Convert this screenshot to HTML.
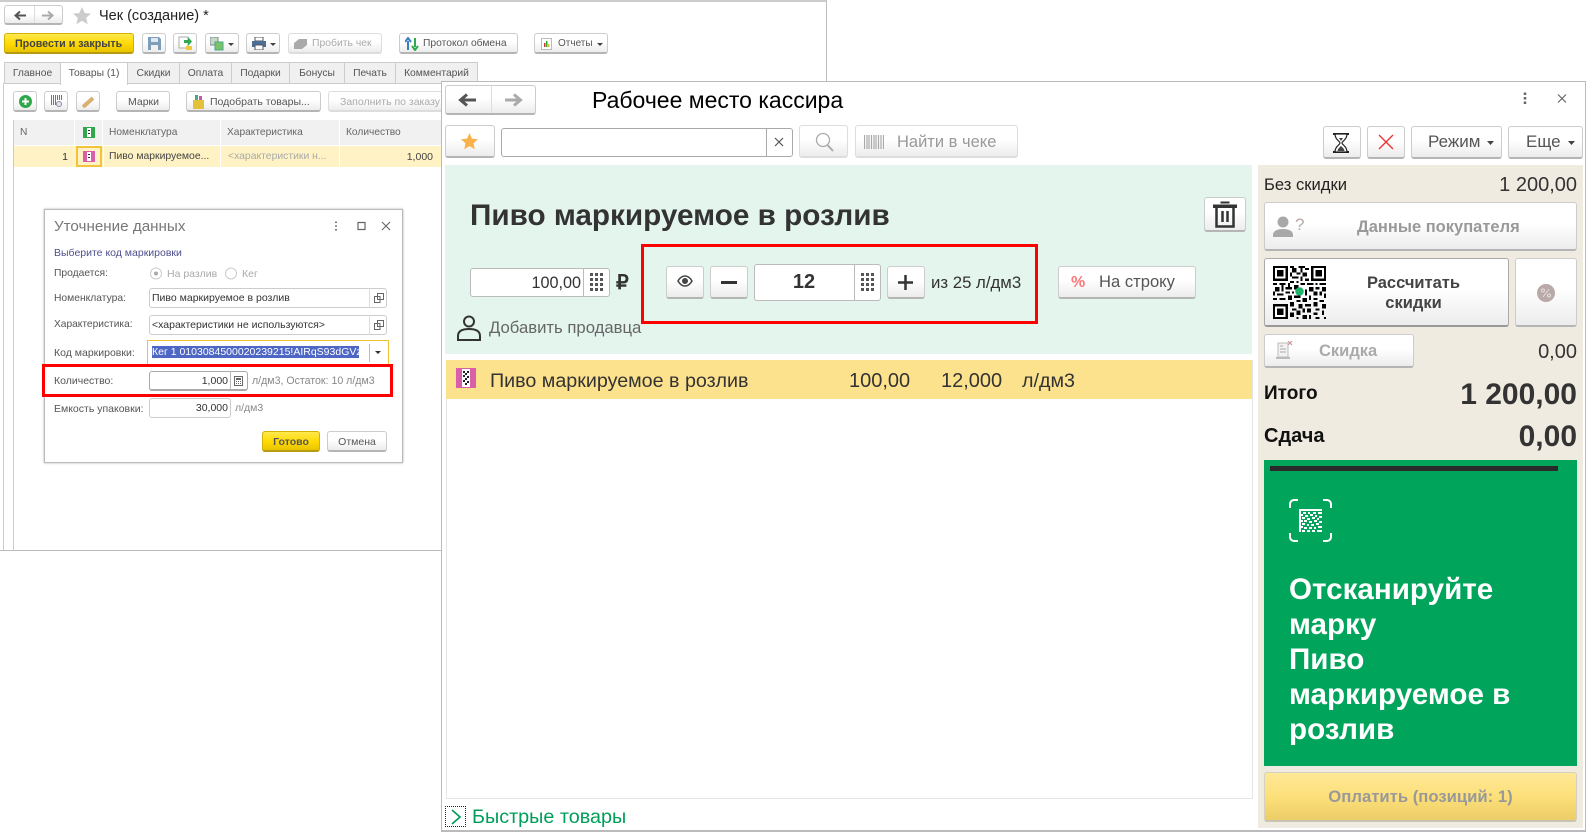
<!DOCTYPE html>
<html lang="ru"><head><meta charset="utf-8"><title>Рабочее место кассира</title>
<style>
html,body{margin:0;padding:0;background:#fff}
body{position:relative;width:1587px;height:834px;overflow:hidden;font-family:"Liberation Sans",sans-serif;color:#444}
div,svg{position:absolute;box-sizing:border-box}
.t{white-space:nowrap;line-height:0;height:0}
.b{background:linear-gradient(#fff 45%,#ececec);border:1px solid #ccc;border-bottom:2px solid #b5b5b5;border-radius:3px}
.i{background:#fff;border:1px solid #ccc;border-radius:3px}
.y{background:linear-gradient(#ffe94d,#ffd900 55%,#e8c400);border:1px solid #d3b100;border-bottom:2px solid #b79a10;border-radius:3px}
.s{font-size:11px;color:#555}
.tab{background:#f0f0f0;border:1px solid #ccc;border-bottom:0;height:21px;top:62px;font-size:10.300px;color:#555;text-align:center;line-height:21px;white-space:nowrap}
.c{background:#f1f1f1;top:120px;height:25px;border-right:1px solid #fff;font-size:10.200px;color:#666;line-height:25px;padding-left:6px;white-space:nowrap}
#back{left:0;top:0;width:1587px;height:834px;filter:blur(.35px)}
</style></head><body>

<div id="back">
<!-- BACK WINDOW -->
<div style="left:0;top:0;width:827px;height:551px;background:#fff;border-right:1px solid #bbb;border-bottom:1px solid #bbb;border-top:2px solid #ccc"></div>
<div style="left:3px;top:83px;width:1px;height:467px;background:#ccc"></div>
<div class="b" style="left:4px;top:5px;width:59px;height:20px"></div>
<div style="left:34px;top:6px;width:1px;height:17px;background:#ddd"></div>
<svg style="left:12px;top:9px" width="46" height="13" viewBox="0 0 46 13"><path d="M14 6.500H4M8 2.500L3.500 6.500 8 10.500" fill="none" stroke="#555" stroke-width="2"/><path d="M30 6.500H40M36 2.500L40.500 6.500 36 10.500" fill="none" stroke="#aaa" stroke-width="2"/></svg>
<svg style="left:72px;top:6px" width="20" height="20" viewBox="0 0 20 20"><path d="M10 1l2.700 6 6.300.6-4.800 4.200 1.500 6.400L10 14.800 4.300 18.200l1.500-6.400L1 7.600 7.300 7z" fill="#ccc"/></svg>
<div class="t" style="left:99px;top:16px;font-size:14.500px;color:#222">Чек (создание) *</div>

<div class="y" style="left:4px;top:33px;width:130px;height:21px"></div>
<div class="t" style="left:15px;top:44px;font-size:10.700px;font-weight:bold;color:#444">Провести и закрыть</div>
<div class="b" style="left:142px;top:33px;width:24px;height:21px"></div>
<svg style="left:148px;top:37px" width="13" height="13" viewBox="0 0 13 13"><path d="M0 0h11l2 2v11H0z" fill="#7d9db9"/><path d="M3 1h7v4H3z" fill="#dce8f2"/><path d="M3 8h7v5H3z" fill="#f0f0f0"/></svg>
<div class="b" style="left:173px;top:33px;width:24px;height:21px"></div>
<svg style="left:178px;top:36px" width="15" height="15" viewBox="0 0 15 15"><path d="M1 1h9v11H1z" fill="#fff" stroke="#aaa"/><path d="M6 4h4V1l4 4.500L10 10V7H6z" fill="#2fa84f"/><path d="M8 10h6v4H8z" fill="#f0c93a"/></svg>
<div class="b" style="left:205px;top:33px;width:34px;height:21px"></div>
<svg style="left:210px;top:37px" width="14" height="14" viewBox="0 0 14 14"><path d="M0 0h8v8H0z" fill="#c9d8c0" stroke="#789"/><path d="M5 5h8v8H5z" fill="#7cc06a" stroke="#4a8"/></svg>
<svg style="left:228px;top:43px" width="6" height="3" viewBox="0 0 6 3"><path d="M0 0h6L3 3z" fill="#444"/></svg>
<div class="b" style="left:246px;top:33px;width:34px;height:21px"></div>
<svg style="left:252px;top:37px" width="14" height="13" viewBox="0 0 14 13"><path d="M3 0h8v4H3z" fill="#fff" stroke="#556"/><path d="M0 4h14v6H0z" fill="#4a6f93"/><path d="M3 8h8v5H3z" fill="#fff" stroke="#556"/></svg>
<svg style="left:270px;top:43px" width="6" height="3" viewBox="0 0 6 3"><path d="M0 0h6L3 3z" fill="#444"/></svg>
<div class="b" style="left:288px;top:33px;width:94px;height:21px;border-color:#ddd"></div>
<svg style="left:294px;top:39px" width="13" height="10" viewBox="0 0 13 10"><path d="M0 4l5-4h8v6l-5 4H0z" fill="#aaa"/></svg>
<div class="t" style="left:312px;top:44px;font-size:10.400px;color:#aaa">Пробить чек</div>
<div class="b" style="left:399px;top:33px;width:119px;height:21px"></div>
<svg style="left:405px;top:37px" width="14" height="14" viewBox="0 0 14 14"><path d="M3 13V4M0 5l3-4 3 4" fill="none" stroke="#3a7fc0" stroke-width="2"/><path d="M10 1v9M7 9l3 4 3-4" fill="none" stroke="#2fa84f" stroke-width="2"/></svg>
<div class="t s" style="left:423px;top:44px;font-size:10.300px">Протокол обмена</div>
<div class="b" style="left:534px;top:33px;width:74px;height:21px"></div>
<svg style="left:541px;top:38px" width="11" height="12" viewBox="0 0 11 12"><path d="M.5.500h10v11H.5z" fill="#fff" stroke="#bbb"/><path d="M3 5h1.500v4H3z" fill="#c33"/><path d="M5 3h1.500v6H5z" fill="#3a3"/><path d="M7 6h1.500v3H7z" fill="#cc3"/></svg>
<div class="t s" style="left:558px;top:44px;font-size:10px">Отчеты</div>
<svg style="left:597px;top:43px" width="6" height="3" viewBox="0 0 6 3"><path d="M0 0h6L3 3z" fill="#444"/></svg>

<div style="left:4px;top:83px;width:822px;height:1px;background:#ccc"></div>
<div class="tab" style="left:4px;width:57px">Главное</div>
<div class="tab" style="left:127px;width:53px">Скидки</div>
<div class="tab" style="left:179px;width:53px">Оплата</div>
<div class="tab" style="left:231px;width:59px">Подарки</div>
<div class="tab" style="left:289px;width:56px">Бонусы</div>
<div class="tab" style="left:344px;width:52px">Печать</div>
<div class="tab" style="left:395px;width:83px">Комментарий</div>
<div class="tab" style="left:60px;width:68px;background:#fff;height:23px">Товары (1)</div>

<div class="b" style="left:13px;top:91px;width:24px;height:21px"></div>
<svg style="left:19px;top:95px" width="13" height="13" viewBox="0 0 13 13"><circle cx="6.500" cy="6.500" r="6.500" fill="#2ea84a"/><path d="M6.500 3v7M3 6.500h7" stroke="#fff" stroke-width="2"/></svg>
<div class="b" style="left:44px;top:91px;width:24px;height:21px"></div>
<svg style="left:50px;top:95px" width="13" height="13" viewBox="0 0 13 13"><path d="M1.500 0v10M3.500 0v10M5.500 0v10M7.500 0v5M9.500 0v5M11.500 0v5" stroke="#666" stroke-width=".9"/><circle cx="9" cy="9" r="2.500" fill="#e4e8f0" stroke="#889"/></svg>
<div class="b" style="left:76px;top:91px;width:24px;height:21px"></div>
<svg style="left:82px;top:95px" width="13" height="13" viewBox="0 0 13 13"><path d="M1 12L11 3" stroke="#d8b070" stroke-width="4"/></svg>
<div class="b" style="left:116px;top:91px;width:54px;height:21px"></div>
<div class="t s" style="left:128px;top:102px;font-size:10.500px">Марки</div>
<div class="b" style="left:186px;top:91px;width:135px;height:21px"></div>
<svg style="left:192px;top:94px" width="13" height="15" viewBox="0 0 13 15"><path d="M1 6h11v9H1z" fill="#e3c23a"/><path d="M3 1h3v5H3z" fill="#4a8"/><path d="M7 2h3v4H7z" fill="#c5a"/></svg>
<div class="t s" style="left:210px;top:102px;font-size:10.500px">Подобрать товары...</div>
<div class="b" style="left:328px;top:91px;width:120px;height:21px;border-color:#ddd"></div>
<div class="t" style="left:340px;top:102px;font-size:10.500px;color:#aaa">Заполнить по заказу</div>

<div style="left:13px;top:120px;width:1px;height:431px;background:#ccc"></div>
<div class="c" style="left:14px;width:61px">N</div>
<div class="c" style="left:75px;width:28px"></div>
<svg style="left:83px;top:127px" width="12" height="11" viewBox="0 0 12 11"><path d="M0 0h12v11H0z" fill="#2ea84a"/><path d="M4 1h4v9H4z" fill="#fff"/><path d="M5 3h2v1H5zM5 6h2v1H5z" fill="#333"/></svg>
<div class="c" style="left:103px;width:118px;padding-left:6px">Номенклатура</div>
<div class="c" style="left:221px;width:119px">Характеристика</div>
<div class="c" style="left:340px;width:102px">Количество</div>
<div style="left:14px;top:146px;width:427px;height:21px;background:#fff2c4"></div>
<div style="left:76px;top:146px;width:26px;height:21px;border:2px solid #f5c33b;background:#fff2c4"></div>
<svg style="left:83px;top:151px" width="12" height="11" viewBox="0 0 12 11"><path d="M0 0h12v11H0z" fill="#d95fa8"/><path d="M4 1h4v9H4z" fill="#fff"/><path d="M5 3h2v1H5zM5 6h2v1H5z" fill="#333"/></svg>
<div style="left:103px;top:146px;width:1px;height:21px;background:#fff"></div>
<div style="left:220px;top:146px;width:1px;height:21px;background:#fff"></div>
<div style="left:339px;top:146px;width:1px;height:21px;background:#fff"></div>
<div class="t s" style="right:1519px;top:157px;font-size:10.500px;color:#333">1</div>
<div class="t s" style="left:109px;top:157px;font-size:10.400px;color:#444">Пиво маркируемое...</div>
<div class="t s" style="left:228px;top:157px;font-size:10.400px;color:#aaa">&lt;характеристики н...</div>
<div class="t s" style="right:1154px;top:157px;font-size:10.500px;color:#444">1,000</div>

<!-- DIALOG -->
<div style="left:44px;top:209px;width:359px;height:254px;background:#fff;border:1px solid #bbb;box-shadow:0 0 2px #aaa"></div>
<div class="t" style="left:54px;top:227px;font-size:15.200px;color:#777">Уточнение данных</div>
<svg style="left:334px;top:220px" width="60" height="12" viewBox="0 0 60 12"><path d="M2 1.500v1.500M2 5.200v1.500M2 9v1.500" stroke="#666" stroke-width="1.800"/><path d="M24 2.500h7v7h-7z" fill="none" stroke="#666" stroke-width="1.200"/><path d="M48 2l8 8M56 2l-8 8" stroke="#666" stroke-width="1.100"/></svg>
<div class="t s" style="left:54px;top:253px;font-size:10.500px;color:#4f4f8f">Выберите код маркировки</div>
<div class="t s" style="left:54px;top:274px;font-size:10.300px">Продается:</div>
<svg style="left:150px;top:267px" width="90" height="13" viewBox="0 0 90 13"><circle cx="6" cy="6.500" r="5.500" fill="#fff" stroke="#ccc"/><circle cx="6" cy="6.500" r="2" fill="#aaa"/><circle cx="81" cy="6.500" r="5.500" fill="#fff" stroke="#ccc"/></svg>
<div class="t" style="left:167px;top:274px;font-size:10.500px;color:#aaa">На разлив</div>
<div class="t" style="left:242px;top:274px;font-size:10.500px;color:#aaa">Кег</div>
<div class="t s" style="left:54px;top:299px;font-size:10.300px">Номенклатура:</div>
<div class="i" style="left:149px;top:288px;width:238px;height:20px"></div>
<div style="left:369px;top:288px;width:1px;height:20px;background:#ddd"></div>
<div class="t s" style="left:152px;top:298px;font-size:10.500px;color:#333">Пиво маркируемое в розлив</div>
<svg style="left:374px;top:293px" width="10" height="10" viewBox="0 0 10 10"><path d="M3.500.5h6v6h-6zM.5 3.500h5.500v6H.5z" fill="#fff" stroke="#666"/></svg>
<div class="t s" style="left:54px;top:325px;font-size:10.200px">Характеристика:</div>
<div class="i" style="left:149px;top:315px;width:238px;height:20px"></div>
<div style="left:369px;top:315px;width:1px;height:20px;background:#ddd"></div>
<div class="t s" style="left:152px;top:325px;font-size:10.500px;color:#333">&lt;характеристики не используются&gt;</div>
<svg style="left:374px;top:320px" width="10" height="10" viewBox="0 0 10 10"><path d="M3.500.5h6v6h-6zM.5 3.500h5.500v6H.5z" fill="#fff" stroke="#666"/></svg>
<div class="t s" style="left:54px;top:353px;font-size:10.500px">Код маркировки:</div>
<div style="left:147px;top:340px;width:242px;height:26px;border:1px solid #f3c233;background:#fff"></div>
<div style="left:152px;top:346px;width:207px;height:12px;background:#4f67c4"></div>
<div class="t" style="left:152px;top:352px;font-size:10.500px;color:#fff">Кег 1 0103084500020239215!AIRqS93dGVz</div>
<div style="left:369px;top:344px;width:1px;height:18px;background:#bbb"></div>
<svg style="left:375px;top:351px" width="6" height="3" viewBox="0 0 6 3"><path d="M0 0h6L3 3z" fill="#333"/></svg>
<div class="t s" style="left:54px;top:381px;font-size:10.500px">Количество:</div>
<div class="i" style="left:149px;top:371px;width:99px;height:20px;border-color:#aaa;border-bottom-width:2px"></div>
<div style="left:230px;top:371px;width:1px;height:19px;background:#bbb"></div>
<div class="t s" style="right:1359px;top:381px;font-size:10.500px;color:#333">1,000</div>
<svg style="left:234px;top:376px" width="9" height="10" viewBox="0 0 9 10"><path d="M.5.500h8v9h-8z" fill="#fff" stroke="#666"/><path d="M2 2h5v2H2zM2 5h1v1H2zM4 5h1v1H4zM6 5h1v1H6zM2 7h1v1H2zM4 7h1v1H4zM6 7h1v1H6z" fill="#666"/></svg>
<div class="t" style="left:252px;top:381px;font-size:10.600px;color:#888">л/дм3, Остаток: 10 л/дм3</div>
<div class="t s" style="left:54px;top:409px;font-size:10.500px">Емкость упаковки:</div>
<div class="i" style="left:149px;top:398px;width:82px;height:20px"></div>
<div class="t s" style="right:1359px;top:408px;font-size:10.500px;color:#333">30,000</div>
<div class="t" style="left:235px;top:408px;font-size:10.500px;color:#888">л/дм3</div>
<div class="y" style="left:262px;top:431px;width:58px;height:21px"></div>
<div class="t" style="left:262px;width:58px;text-align:center;top:442px;font-size:10.500px;font-weight:bold;color:#555">Готово</div>
<div class="b" style="left:327px;top:431px;width:60px;height:21px"></div>
<div class="t s" style="left:327px;width:60px;text-align:center;top:442px;font-size:10.500px">Отмена</div>
<div style="left:42px;top:364px;width:351px;height:33px;border:3px solid #f00"></div>
</div>

<!-- MAIN WINDOW -->
<div style="left:441px;top:81px;width:1145px;height:751px;background:#fff;border:1px solid #bbb;border-bottom-width:2px"></div>
<div class="b" style="left:445px;top:85px;width:91px;height:30px"></div>
<div style="left:491px;top:86px;width:1px;height:27px;background:#ddd"></div>
<svg style="left:458px;top:92px" width="70" height="16" viewBox="0 0 70 16"><path d="M18 8H3M9 2.500L2.500 8 9 13.500" fill="none" stroke="#555" stroke-width="3"/><path d="M47 8h15M56 2.500L62.500 8 56 13.500" fill="none" stroke="#aaa" stroke-width="3"/></svg>
<div class="t" style="left:592px;top:100px;font-size:23px;color:#000">Рабочее место кассира</div>
<svg style="left:1522px;top:92px" width="50" height="13" viewBox="0 0 50 13"><path d="M3 .5v2.500M3 5v2.500M3 9.500V12" stroke="#666" stroke-width="2.500"/><path d="M36 2.500l8 8M44 2.500l-8 8" stroke="#666" stroke-width="1.200"/></svg>

<div class="b" style="left:445px;top:125px;width:50px;height:33px"></div>
<svg style="left:461px;top:133px" width="17" height="17" viewBox="0 0 17 17"><path d="M8.500 0l2.500 5.600 6 .6-4.500 4 1.300 6-5.300-3.100-5.300 3.100 1.300-6L0 6.200l6-.6z" fill="#f9b24a"/></svg>
<div class="i" style="left:501px;top:128px;width:292px;height:29px;border-color:#aaa"></div>
<div style="left:766px;top:128px;width:1px;height:29px;background:#aaa"></div>
<svg style="left:774px;top:137px" width="10" height="10" viewBox="0 0 10 10"><path d="M1 1l8 8M9 1L1 9" stroke="#555" stroke-width="1.200"/></svg>
<div class="b" style="left:799px;top:125px;width:49px;height:33px;border-color:#ddd"></div>
<svg style="left:815px;top:132px" width="20" height="20" viewBox="0 0 20 20"><circle cx="8" cy="8" r="6.500" fill="none" stroke="#aaa" stroke-width="1.300"/><path d="M12.500 13l5.500 6" stroke="#aaa" stroke-width="2"/></svg>
<div class="b" style="left:855px;top:125px;width:163px;height:33px;border-color:#ddd"></div>
<svg style="left:864px;top:135px" width="20" height="14" viewBox="0 0 20 14"><path d="M.5 0v14M3 0v14M5 0v14M7.500 0v14M10 0v14M12 0v14M14.500 0v14M17 0v14M19.500 0v14" stroke="#aaa" stroke-width="1.200"/></svg>
<div class="t" style="left:897px;top:142px;font-size:16.500px;color:#999">Найти в чеке</div>

<!-- green panel -->
<div style="left:445px;top:165px;width:807px;height:189px;background:#e4f5ee"></div>
<div class="t" style="left:470px;top:216px;font-size:29.700px;font-weight:bold;color:#333">Пиво маркируемое в розлив</div>
<div class="b" style="left:1204px;top:197px;width:42px;height:35px"></div>
<svg style="left:1213px;top:201px" width="24" height="27" viewBox="0 0 24 27"><path d="M8 2.500V1h8v1.500M0 4h24v2.500H0z" fill="#333" stroke="#333"/><path d="M3.500 6.500V25.500h17V6.500" fill="none" stroke="#333" stroke-width="2.500"/><path d="M9.500 10v11M14.500 10v11" stroke="#333" stroke-width="2.500"/></svg>

<div class="i" style="left:470px;top:268px;width:140px;height:29px;border-color:#bbb"></div>
<div style="left:583px;top:268px;width:1px;height:29px;background:#bbb"></div>
<div class="t" style="right:1006px;top:283px;font-size:16.200px;color:#333">100,00</div>
<svg style="left:590px;top:273px" width="14" height="19" viewBox="0 0 14 19"><path d="M0 0h3v3H0zM5 0h3v3H5zM10 0h3v3h-3zM0 5h3v3H0zM5 5h3v3H5zM10 5h3v3h-3zM0 10h3v3H0zM5 10h3v3H5zM10 10h3v3h-3zM0 15h3v3H0zM5 15h3v3H5zM10 15h3v3h-3z" fill="#555"/></svg>
<div class="t" style="left:616px;top:283px;font-size:20px;font-weight:bold;color:#333">₽</div>

<div class="b" style="left:666px;top:266px;width:38px;height:33px"></div>
<svg style="left:677px;top:275px" width="16" height="12" viewBox="0 0 16 12"><path d="M1 6c2-3.500 4.500-5 7-5s5 1.500 7 5c-2 3.500-4.500 5-7 5S3 9.500 1 6z" fill="#fff" stroke="#444" stroke-width="1.500"/><circle cx="8" cy="6" r="3" fill="#444"/></svg>
<div class="b" style="left:710px;top:266px;width:38px;height:33px"></div>
<div style="left:721px;top:281px;width:16px;height:3px;background:#333"></div>
<div class="i" style="left:754px;top:264px;width:127px;height:37px;border-color:#bbb"></div>
<div style="left:854px;top:264px;width:1px;height:37px;background:#bbb"></div>
<div class="t" style="left:754px;width:100px;text-align:center;top:282px;font-size:20px;font-weight:bold;color:#333">12</div>
<svg style="left:861px;top:273px" width="14" height="19" viewBox="0 0 14 19"><path d="M0 0h3v3H0zM5 0h3v3H5zM10 0h3v3h-3zM0 5h3v3H0zM5 5h3v3H5zM10 5h3v3h-3zM0 10h3v3H0zM5 10h3v3H5zM10 10h3v3h-3zM0 15h3v3H0zM5 15h3v3H5zM10 15h3v3h-3z" fill="#555"/></svg>
<div class="b" style="left:887px;top:266px;width:38px;height:33px"></div>
<svg style="left:897px;top:274px" width="17" height="17" viewBox="0 0 17 17"><path d="M8.500 1v15M1 8.500h15" stroke="#333" stroke-width="2.500"/></svg>
<div class="t" style="left:931px;top:283px;font-size:16.800px;color:#333">из 25 л/дм3</div>
<div style="left:641px;top:244px;width:397px;height:80px;border:3px solid #f00"></div>

<div class="b" style="left:1058px;top:266px;width:138px;height:33px"></div>
<div class="t" style="left:1071px;top:283px;font-size:16px;font-weight:bold;color:#f77">%</div>
<div class="t" style="left:1099px;top:282px;font-size:16.600px;color:#555">На строку</div>

<svg style="left:456px;top:315px" width="26" height="26" viewBox="0 0 26 26"><circle cx="13" cy="6.500" r="5" fill="none" stroke="#333" stroke-width="2"/><path d="M2 25v-4c0-5 4-7 11-7s11 2 11 7v4z" fill="none" stroke="#333" stroke-width="2"/></svg>
<div class="t" style="left:489px;top:328px;font-size:16.700px;color:#666">Добавить продавца</div>

<!-- list -->
<div style="left:446px;top:360px;width:807px;height:439px;border:1px solid #e5e5e5;border-top:0"></div>
<div style="left:446px;top:360px;width:806px;height:39px;background:#fde28d"></div>
<svg style="left:456px;top:368px" width="20" height="20" viewBox="0 0 20 20"><path d="M0 0h20v20H0z" fill="#d95fa8"/><path d="M6 1h8v18H6z" fill="#fff"/><path d="M7 3h2v2H7zM11 3h2v2h-2zM9 5h2v2H9zM7 7h2v2H7zM11 8h2v2h-2zM9 10h2v2H9zM7 12h2v2H7zM11 13h2v2h-2zM9 15h2v2H9z" fill="#222"/></svg>
<div class="t" style="left:490px;top:381px;font-size:19.700px;color:#333">Пиво маркируемое в розлив</div>
<div class="t" style="left:849px;top:381px;font-size:20px;color:#333">100,00</div>
<div class="t" style="left:941px;top:381px;font-size:20px;color:#333">12,000</div>
<div class="t" style="left:1022px;top:381px;font-size:19.700px;color:#333">л/дм3</div>

<div style="left:445px;top:806px;width:21px;height:21px;border:1px dotted #222"></div>
<svg style="left:451px;top:809px" width="11" height="16" viewBox="0 0 11 16"><path d="M1 1l8 7-8 7" fill="none" stroke="#00a05a" stroke-width="1.700"/></svg>
<div class="t" style="left:472px;top:817px;font-size:19.800px;color:#009e58">Быстрые товары</div>

<!-- top right buttons -->
<div class="b" style="left:1323px;top:126px;width:38px;height:33px"></div>
<svg style="left:1332px;top:133px" width="18" height="20" viewBox="0 0 18 20"><path d="M1 1h16M1 19h16" stroke="#222" stroke-width="2"/><path d="M3 1c0 6 5 7 5 9s-5 3-5 9h12c0-6-5-7-5-9s5-3 5-9z" fill="#fff" stroke="#222" stroke-width="1.200"/><path d="M5.500 18c0-2 2.500-4 3.500-5 1 1 3.500 3 3.500 5zM7 5h4L9 8z" fill="#444"/></svg>
<div class="b" style="left:1367px;top:126px;width:38px;height:33px"></div>
<svg style="left:1378px;top:134px" width="16" height="16" viewBox="0 0 16 16"><path d="M1 1l14 14M15 1L1 15" stroke="#f03030" stroke-width="1.300"/></svg>
<div class="b" style="left:1411px;top:126px;width:91px;height:33px"></div>
<div class="t" style="left:1428px;top:142px;font-size:17px;color:#555">Режим</div>
<svg style="left:1487px;top:141px" width="7" height="4" viewBox="0 0 7 4"><path d="M0 0h7L3.500 4z" fill="#444"/></svg>
<div class="b" style="left:1508px;top:126px;width:75px;height:33px"></div>
<div class="t" style="left:1526px;top:142px;font-size:17px;color:#555">Еще</div>
<svg style="left:1568px;top:141px" width="7" height="4" viewBox="0 0 7 4"><path d="M0 0h7L3.500 4z" fill="#444"/></svg>

<!-- right beige panel -->
<div style="left:1258px;top:165px;width:325px;height:663px;background:#f0ebe0"></div>
<div class="t" style="left:1264px;top:185px;font-size:16.600px;color:#222">Без скидки</div>
<div class="t" style="right:10px;top:185px;font-size:20px;color:#333">1 200,00</div>
<div class="b" style="left:1264px;top:202px;width:313px;height:49px"></div>
<svg style="left:1273px;top:215px" width="36" height="23" viewBox="0 0 36 23"><circle cx="10" cy="7" r="5.500" fill="#a8a8a8"/><path d="M0 22v-2c0-4 4-6 10-6s10 2 10 6v2z" fill="#a8a8a8"/></svg>
<div class="t" style="left:1295px;top:225px;font-size:17px;color:#bba9a9">?</div>
<div class="t" style="left:1357px;top:227px;font-size:16.500px;font-weight:bold;color:#999">Данные покупателя</div>

<div class="b" style="left:1264px;top:258px;width:245px;height:69px;border-color:#aaa;border-bottom-color:#999"></div>
<svg style="left:1273px;top:266px" width="53" height="53" viewBox="0 0 25 25" shape-rendering="crispEdges"><path fill="#000" d="M0 0h7v7H0zM18 0h7v7h-7zM0 18h7v7H0z"/><path fill="#fff" d="M1 1h5v5H1zM19 1h5v5h-5zM1 19h5v5H1z"/><path fill="#000" d="M2 2h3v3H2zM20 2h3v3h-3zM2 20h3v3H2z"/><path fill="#000" d="M8 0h2v1H8zM12 0h3v1h-3zM9 1h2v2H9zM13 1h1v2h-1zM15 1h2v1h-2zM8 3h1v2H8zM11 3h2v1h-2zM14 3h2v2h-2zM9 5h3v1H9zM13 5h1v2h-1zM15 6h2v1h-2zM8 7h2v1H8zM11 7h1v1h-1zM0 8h2v1H0zM3 8h3v1H3zM7 8h1v2H7zM13 8h2v1h-2zM16 8h3v1h-3zM20 8h1v1h-1zM22 8h3v1h-3zM1 10h2v2H1zM4 9h1v3H4zM6 10h3v1H6zM10 9h2v2h-2zM17 10h2v2h-2zM20 10h2v1h-2zM23 10h2v2h-2zM0 12h1v2H0zM2 13h3v1H2zM6 12h2v1H6zM9 12h1v1H9zM15 11h1v3h-1zM19 12h2v2h-2zM22 12h1v2h-1zM24 13h1v2h-1zM0 15h2v1H0zM3 15h3v1H3zM7 14h2v2H7zM10 14h3v1h-3zM14 15h2v2h-2zM17 14h1v2h-1zM19 15h2v1h-2zM22 16h2v1h-2zM8 17h2v2H8zM11 16h2v1h-2zM12 18h2v2h-2zM15 18h3v1h-3zM19 17h2v2h-2zM23 18h2v2h-2zM9 20h2v1H9zM14 20h1v2h-1zM16 20h2v2h-2zM20 20h2v1h-2zM8 22h2v2H8zM11 21h2v2h-2zM19 22h2v1h-2zM23 21h1v2h-1zM11 24h1v1h-1zM14 23h2v2h-2zM17 23h1v2h-1zM20 24h2v1h-2zM24 24h1v1h-1z"/><circle cx="12.500" cy="12" r="2" fill="#1fb36b" shape-rendering="auto"/></svg>
<div class="t" style="left:1336px;width:155px;text-align:center;top:283px;font-size:16.500px;font-weight:bold;color:#444">Рассчитать</div>
<div class="t" style="left:1336px;width:155px;text-align:center;top:303px;font-size:16.500px;font-weight:bold;color:#444">скидки</div>
<div class="b" style="left:1515px;top:258px;width:62px;height:69px"></div>
<svg style="left:1537px;top:284px" width="18" height="18" viewBox="0 0 18 18"><circle cx="9" cy="9" r="9" fill="#b9a9a9"/><path d="M6 13l6-8" stroke="#e8dfdf"/><circle cx="6" cy="6.500" r="1.500" fill="none" stroke="#e8dfdf"/><circle cx="12" cy="11.500" r="1.500" fill="none" stroke="#e8dfdf"/></svg>
<div class="b" style="left:1264px;top:334px;width:150px;height:34px"></div>
<svg style="left:1275px;top:341px" width="19" height="19" viewBox="0 0 19 19"><path d="M3 2h10v14H3z" fill="#f2f2f2" stroke="#bbb"/><path d="M5 5h3M5 8h6M5 11h6" stroke="#aaa"/><path d="M1 17h14" stroke="#bbb" stroke-width="2"/><path d="M13 0l4 4M17 0l-4 4" stroke="#c99" stroke-width="1.200"/></svg>
<div class="t" style="left:1319px;top:351px;font-size:16.500px;font-weight:bold;color:#aaa">Скидка</div>
<div class="t" style="right:10px;top:352px;font-size:20px;color:#333">0,00</div>
<div class="t" style="left:1264px;top:394px;font-size:19px;font-weight:bold;color:#111">Итого</div>
<div class="t" style="right:10px;top:395px;font-size:30px;font-weight:bold;color:#333">1 200,00</div>
<div class="t" style="left:1264px;top:436px;font-size:20px;font-weight:bold;color:#111">Сдача</div>
<div class="t" style="right:10px;top:437px;font-size:30px;font-weight:bold;color:#333">0,00</div>

<div style="left:1264px;top:460px;width:313px;height:306px;background:#00a45b"></div>
<div style="left:1270px;top:466px;width:288px;height:5px;background:#2a2a2a"></div>
<svg style="left:1289px;top:499px" width="43" height="43" viewBox="0 0 43 43"><path d="M1 9V5a4 4 0 0 1 4-4h4M34 1h4a4 4 0 0 1 4 4v4M42 34v4a4 4 0 0 1-4 4h-4M9 42H5a4 4 0 0 1-4-4v-4" fill="none" stroke="#fff" stroke-width="2"/><path fill="#fff" d="M10 10h23v2H10zM10 12h2v21h-2zM14 13h3v2h-3zM19 13h2v2h-2zM24 13h3v2h-3zM29 13h4v2h-4zM12 15h2v2h-2zM16 16h3v2h-3zM21 15h3v2h-3zM26 16h2v2h-2zM30 17h3v2h-3zM13 18h3v2h-3zM18 19h3v2h-3zM23 18h3v2h-3zM28 19h2v2h-2zM12 21h2v2h-2zM15 21h3v2h-3zM20 22h3v2h-3zM25 21h3v2h-3zM30 22h3v2h-3zM13 24h3v2h-3zM18 25h2v2h-2zM22 25h3v2h-3zM27 24h3v2h-3zM12 27h2v2h-2zM15 28h3v2h-3zM20 28h3v2h-3zM25 28h2v2h-2zM29 27h4v2h-4zM13 31h3v2h-3zM18 31h3v2h-3zM23 31h3v2h-3zM28 31h5v2h-5z"/></svg>
<div style="left:1289px;top:572px;font-size:29.600px;line-height:35px;font-weight:bold;color:#fff;width:280px">Отсканируйте<br>марку<br>Пиво<br>маркируемое в<br>розлив</div>

<div style="left:1264px;top:772px;width:313px;height:50px;background:linear-gradient(#fde896,#fde07a 50%,#eccd68);border:1px solid #d5d0c0;border-bottom:2px solid #c8c4b4;border-radius:3px"></div>
<div class="t" style="left:1264px;width:313px;text-align:center;top:797px;font-size:16.700px;font-weight:bold;color:#999">Оплатить (позиций: 1)</div>
</body></html>
